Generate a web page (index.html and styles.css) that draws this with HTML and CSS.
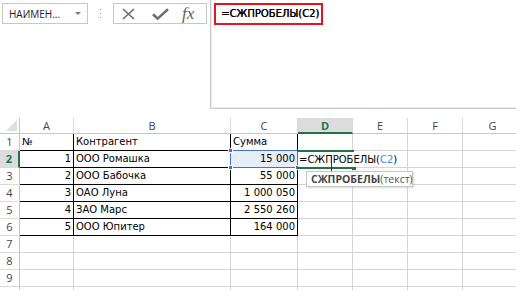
FILE: index.html
```html
<!DOCTYPE html>
<html lang="ru">
<head>
    <meta charset="UTF-8">
    <title>СЖПРОБЕЛЫ</title>
    <link rel="stylesheet" href="styles.css">
</head>
<body>
    <div class="toolbar">
        <div class="namebox">
            <span>НАИМЕН...</span>
            <span class="arrow"></span>
        </div>
        <div class="grip"><i></i><i></i><i></i></div>
        <div class="fxbox">
            <svg class="btn-cancel" width="13" height="12" viewBox="0 0 13 12">
                <path d="M1 1L12 11M12 1L1 11" stroke="#6a6a6a" stroke-width="1.6" fill="none"/>
            </svg>
            <svg class="btn-enter" width="17" height="12" viewBox="0 0 17 12">
                <path d="M1 6.2L5.6 10.6L16 1.2" stroke="#707070" stroke-width="2.6" fill="none"/>
            </svg>
            <span class="fx">fx</span>
        </div>
        <div class="formula">
            <div class="formula-text">=СЖПРОБЕЛЫ(C2)</div>
        </div>
    </div>

    <div class="sheet">
        <div class="grid">
            <div class="corner"></div>
            <div class="ch">A</div>
            <div class="ch">B</div>
            <div class="ch">C</div>
            <div class="ch sel">D</div>
            <div class="ch">E</div>
            <div class="ch">F</div>
            <div class="ch">G</div>

            <div class="rh">1</div>
            <div class="c b">№</div>
            <div class="c b">Контрагент</div>
            <div class="c b">Сумма</div>
            <div class="c"></div><div class="c"></div><div class="c"></div><div class="c"></div>

            <div class="rh sel">2</div>
            <div class="c b r">1</div>
            <div class="c b">ООО Ромашка</div>
            <div class="c b r ref">15 000</div>
            <div class="c"></div><div class="c"></div><div class="c"></div><div class="c"></div>

            <div class="rh">3</div>
            <div class="c b r">2</div>
            <div class="c b">ООО Бабочка</div>
            <div class="c b r">55 000</div>
            <div class="c"></div><div class="c"></div><div class="c"></div><div class="c"></div>

            <div class="rh">4</div>
            <div class="c b r">3</div>
            <div class="c b">ОАО Луна</div>
            <div class="c b r">1 000 050</div>
            <div class="c"></div><div class="c"></div><div class="c"></div><div class="c"></div>

            <div class="rh">5</div>
            <div class="c b r">4</div>
            <div class="c b">ЗАО Марс</div>
            <div class="c b r">2 550 260</div>
            <div class="c"></div><div class="c"></div><div class="c"></div><div class="c"></div>

            <div class="rh">6</div>
            <div class="c b r">5</div>
            <div class="c b">ООО Юпитер</div>
            <div class="c b r">164 000</div>
            <div class="c"></div><div class="c"></div><div class="c"></div><div class="c"></div>

            <div class="rh">7</div>
            <div class="c"></div><div class="c"></div><div class="c"></div>
            <div class="c"></div><div class="c"></div><div class="c"></div><div class="c"></div>

            <div class="rh">8</div>
            <div class="c"></div><div class="c"></div><div class="c"></div>
            <div class="c"></div><div class="c"></div><div class="c"></div><div class="c"></div>

            <div class="rh">9</div>
            <div class="c"></div><div class="c"></div><div class="c"></div>
            <div class="c"></div><div class="c"></div><div class="c"></div><div class="c"></div>

            <div class="rh"></div>
            <div class="c"></div><div class="c"></div><div class="c"></div>
            <div class="c"></div><div class="c"></div><div class="c"></div><div class="c"></div>
        </div>

        <!-- range reference C2 -->
        <div class="ref-box">
            <i class="knob tl"></i><i class="knob bl"></i><i class="knob br"></i>
        </div>

        <!-- active cell D2 in edit mode -->
        <div class="active-box"><i class="handle"></i></div>
        <div class="editor">=СЖПРОБЕЛЫ(<span class="arg">C2</span>)</div>
        <div class="ibeam"></div>

        <div class="tip"><b>СЖПРОБЕЛЫ</b>(текст)</div>
    </div>
</body>
</html>
```

FILE: styles.css
```css
* {
    margin: 0;
    padding: 0;
    box-sizing: border-box;
}

body {
    width: 516px;
    height: 290px;
    overflow: hidden;
    background: #fff;
    font-family: 'Open Sans', 'Liberation Sans', sans-serif;
    font-size: 11px;
    color: #000;
}

/* ---------- formula bar ---------- */

.toolbar {
    display: flex;
    align-items: flex-start;
    height: 109px;
}

.namebox {
    display: flex;
    align-items: center;
    justify-content: space-between;
    width: 86px;
    height: 21px;
    margin: 3px 0 0 2px;
    padding: 0 6px 0 6px;
    border: 1px solid #c6c6c6;
    font-size: 10px;
    color: #222;
}

.arrow {
    width: 0;
    height: 0;
    border-left: 3px solid transparent;
    border-right: 3px solid transparent;
    border-top: 3px solid #7a7a7a;
}

.grip {
    display: flex;
    flex-direction: column;
    align-items: center;
    gap: 3px;
    width: 25px;
    padding-top: 9px;
}

.grip i {
    width: 1px;
    height: 1px;
    background: #999;
}

.fxbox {
    display: flex;
    align-items: center;
    width: 94px;
    height: 21px;
    margin-top: 3px;
    border: 1px solid #c6c6c6;
}

.btn-cancel {
    margin-left: 8px;
}

.btn-enter {
    margin-left: 17px;
}

.fx {
    margin-left: 13px;
    font-family: 'Liberation Serif', serif;
    font-style: italic;
    font-size: 17px;
    color: #5e5e5e;
    line-height: 1;
}

.formula {
    flex: 1;
    height: 109px;
    margin-left: 3px;
    padding: 3px 0 0 3px;
    border-left: 1px solid #c8c8c8;
    border-bottom: 1px solid #c8c8c8;
    box-shadow: inset 1px -1px 0 #ececec;
}

.formula-text {
    width: 109px;
    height: 22px;
    padding-left: 5px;
    border: 2px solid #e8141c;
    font-family: 'DejaVu Sans', 'Open Sans', sans-serif;
    font-size: 10px;
    line-height: 18px;
    text-shadow: 0.4px 0 0 #000;
}

/* ---------- sheet ---------- */

.sheet {
    position: relative;
    height: 172px;
    margin-top: 9px;
    overflow: hidden;
}

.grid {
    display: grid;
    grid-template-columns: 20px 54px 157px 67px 55px 55px 55px 60px;
    grid-template-rows: 16px repeat(10, 17px);
    width: 523px;
}

.grid > div {
    border-right: 1px solid #d4d4d4;
    border-bottom: 1px solid #d4d4d4;
    white-space: nowrap;
    overflow: hidden;
}

.corner {
    position: relative;
    border-color: #c6c6c6 !important;
}

.corner::after {
    content: "";
    position: absolute;
    right: 2px;
    bottom: 2px;
    border-left: 11px solid transparent;
    border-bottom: 11px solid #dfdfdf;
}

.ch {
    text-align: center;
    line-height: 15px;
    color: #444;
    border-right-color: #dadada !important;
    border-bottom-color: #c6c6c6 !important;
}

.rh {
    text-align: center;
    line-height: 16px;
    color: #444;
    border-right-color: #c6c6c6 !important;
    border-bottom-color: #dadada !important;
}

.ch.sel {
    background: #dcdcdc;
    color: #217346;
    font-weight: 700;
    border-bottom: 2px solid #217346 !important;
}

.rh.sel {
    background: #dcdcdc;
    color: #217346;
    font-weight: 700;
    border-right: 2px solid #217346 !important;
}

.c,
.editor {
    font-family: 'DejaVu Sans', 'Open Sans', sans-serif;
    font-size: 10px;
}

.c {
    padding: 0 2px;
    line-height: 16px;
}

.c.b {
    border-right-color: #000;
    border-bottom-color: #000;
}

.c.r {
    text-align: right;
}

.c.ref {
    background: #e6eefa;
}

/* ---------- overlays on the grid ---------- */

.ref-box {
    position: absolute;
    left: 230px;
    top: 32px;
    width: 68px;
    height: 18px;
    border: 1px solid #4472c4;
}

.knob {
    position: absolute;
    width: 5px;
    height: 5px;
    background: #4472c4;
    border: 1px solid #fff;
}

.knob.tl { left: -3px; top: -3px; }
.knob.bl { left: -3px; bottom: -3px; }
.knob.br { right: -3px; bottom: -3px; }

.active-box {
    position: absolute;
    left: 297px;
    top: 32px;
    width: 57px;
    height: 19px;
    border-top: 2px solid #217346;
    border-bottom: 2px solid #217346;
}

.handle {
    position: absolute;
    right: -2px;
    bottom: -3px;
    width: 4px;
    height: 4px;
    background: #217346;
}

.editor {
    position: absolute;
    left: 298px;
    top: 34px;
    height: 15px;
    padding: 0 4px 0 1px;
    background: #fff;
    line-height: 15px;
    white-space: nowrap;
}

.arg {
    color: #4a86d9;
}

.ibeam {
    position: absolute;
    left: 331px;
    top: 38px;
    width: 1px;
    height: 15px;
    background: #333;
}

.tip {
    position: absolute;
    left: 306px;
    top: 53px;
    width: 107px;
    height: 16px;
    padding-left: 4px;
    background: #fff;
    border: 1px solid #c6c6c6;
    box-shadow: 1px 1px 2px rgba(0, 0, 0, 0.15);
    font-size: 10.5px;
    line-height: 14px;
    color: #555;
    white-space: nowrap;
}

.tip b {
    color: #444;
}
```
